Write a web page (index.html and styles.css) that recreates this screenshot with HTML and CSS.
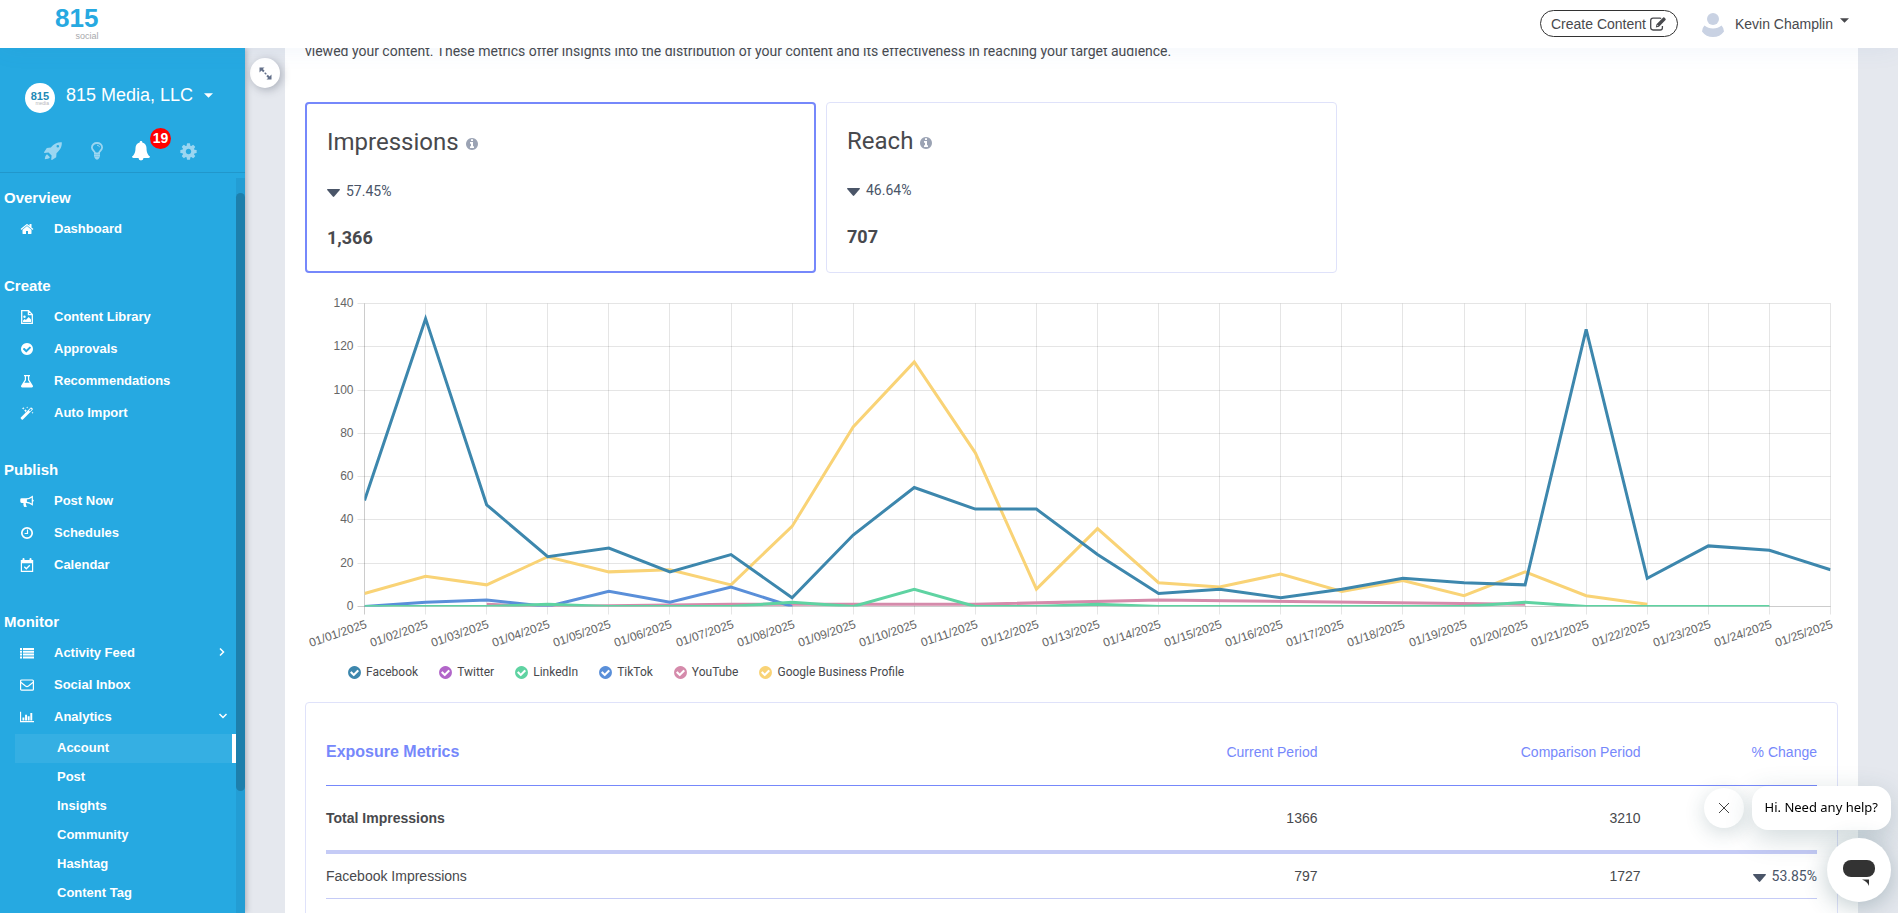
FILE: index.html
```html
<!DOCTYPE html>
<html lang="en">
<head>
<meta charset="utf-8">
<title>815 Social - Account Analytics</title>
<link rel="stylesheet" href="styles.css">
</head>
<body>
<svg class="sprite" aria-hidden="true">
  <symbol id="i-home" viewBox="0 0 1792 1792"><path d="M1472 992v480q0 26-19 45t-45 19h-384v-384h-256v384h-384q-26 0-45-19t-19-45v-480q0-1 .5-3t.5-3l575-474 575 474q1 2 1 6zm223-69l-62 74q-8 9-21 11h-3q-13 0-21-7l-692-577-692 577q-12 8-24 7-13-2-21-11l-62-74q-8-10-7-23.5t11-21.5l719-599q32-26 76-26t76 26l244 204v-195q0-14 9-23t23-9h192q14 0 23 9t9 23v408l219 182q10 8 11 21.5t-7 23.5z"/></symbol>
  <symbol id="i-check" viewBox="0 0 1792 1792"><path d="M1412 734q0-28-18-46l-91-90q-19-19-45-19t-45 19l-408 407-226-226q-19-19-45-19t-45 19l-91 90q-18 18-18 46 0 27 18 45l362 362q19 19 45 19 27 0 46-19l543-543q18-18 18-45zm252 162q0 209-103 385.5t-279.5 279.5-385.5 103-385.5-103-279.5-279.5-103-385.5 103-385.5 279.5-279.5 385.5-103 385.5 103 279.5 279.5 103 385.5z"/></symbol>
  <symbol id="i-info" viewBox="0 0 1792 1792"><path d="M1152 1376v-160q0-14-9-23t-23-9h-96v-512q0-14-9-23t-23-9h-320q-14 0-23 9t-9 23v160q0 14 9 23t23 9h96v320h-96q-14 0-23 9t-9 23v160q0 14 9 23t23 9h448q14 0 23-9t9-23zm-128-896v-160q0-14-9-23t-23-9h-192q-14 0-23 9t-9 23v160q0 14 9 23t23 9h192q14 0 23-9t9-23zm640 416q0 209-103 385.5t-279.5 279.5-385.5 103-385.5-103-279.5-279.5-103-385.5 103-385.5 279.5-279.5 385.5-103 385.5 103 279.5 279.5 103 385.5z"/></symbol>
  <symbol id="i-gear" viewBox="0 0 1792 1792"><path d="M1152 896q0-106-75-181t-181-75-181 75-75 181 75 181 181 75 181-75 75-181zm512-109v222q0 12-8 23t-20 13l-185 28q-19 54-39 91 35 50 107 138 10 12 10 25t-9 23q-27 37-99 108t-94 71q-12 0-26-9l-138-108q-44 23-91 38-16 136-29 186-7 28-36 28h-222q-14 0-24.5-8.5t-11.5-21.5l-28-184q-49-16-90-37l-141 107q-10 9-25 9-14 0-25-11-126-114-165-168-7-10-7-23 0-12 8-23 15-21 51-66.5t54-70.5q-27-50-41-99l-183-27q-13-2-21-12.5t-8-23.5v-222q0-12 8-23t19-13l186-28q14-46 39-92-40-57-107-138-10-12-10-24 0-10 9-23 26-36 98.5-107.5t94.5-71.5q13 0 26 10l138 107q44-23 91-38 16-136 29-186 7-28 36-28h222q14 0 24.5 8.5t11.5 21.5l28 184q49 16 90 37l142-107q9-9 24-9 13 0 25 10 129 119 165 170 7 8 7 22 0 12-8 23-15 21-51 66.5t-54 70.5q26 50 41 98l183 28q13 2 21 12.5t8 23.5z"/></symbol>
  <symbol id="i-rocket" viewBox="0 0 18 18"><path fill-rule="evenodd" d="M17.8.3C18 4 17 7.400 12.500 11.200L12.200 15.200 8 18 7.200 17.700 7.600 13.600 4.500 10.500.4 11 0 10.200 2.800 6 6.800 5.600C10.500 1 14 0 17.800.3ZM13.800 2.900a1.300 1.300 0 1 0 0 2.600 1.300 1.300 0 0 0 0-2.600ZM3 12.200l3 3C5 16.800 3 17 .8 17.300 1 15 1.500 13.300 3 12.200Z"/></symbol>
  <symbol id="i-bulb" viewBox="0 0 12 18"><path fill="none" stroke="currentColor" stroke-width="1.800" d="M4.100 11.500C4.100 9.200.9 8.500.9 5.500.9 2.700 3.200 1 6 1s5.100 1.700 5.100 4.500c0 3-3.200 3.700-3.200 6"/><path d="M3 10.500h6v2.200H3zM3 13h6v1.800H3zM3.200 15h5.600L7.800 16.500C7.300 18 4.700 18 4.200 16.500Z"/><path fill="none" stroke="currentColor" stroke-width="1" d="M6 3.300c1.400 0 2.300.7 2.400 1.900"/></symbol>
  <symbol id="i-bell" viewBox="0 0 18 20"><path d="M9 0c.9 0 1.400.6 1.300 1.400 2.700.6 4.200 2.800 4.200 5.600 0 4.600 1.300 6.800 3.500 8.600 0 .8-.6 1.400-1.400 1.400h-5.100A2.500 2.500 0 0 1 6.500 17H1.400C.6 17 0 16.400 0 15.600 2.200 13.800 3.500 11.600 3.500 7c0-2.800 1.500-5 4.200-5.600C7.600.6 8.100 0 9 0Z"/></symbol>
  <symbol id="i-file" viewBox="0 0 14 14"><path fill="none" stroke="currentColor" stroke-width="1.300" d="M1.700.7h6.900l3.700 3.700v8.900H1.700ZM8.400.7v3.900h3.900"/><circle cx="4.500" cy="6.800" r="1.200"/><path d="M3 12v-1.500L4.700 9l1.200 1L8.700 7 11 9.500V12Z"/></symbol>
  <symbol id="i-flask" viewBox="0 0 14 14"><path fill-rule="evenodd" d="M4 1h6v1.200h-.8v3.600l3.600 5.700c.6 1-.1 1.900-1 1.900H2.200c-.9 0-1.600-.9-1-1.900l3.600-5.700V2.200H4ZM6 2.200v4L4.400 8.800h5.200L8 6.200v-4Z"/></symbol>
  <symbol id="i-magic" viewBox="0 0 14 14"><path fill-rule="evenodd" d="M.8 11.500 10.500 1.700q.6-.5 1.200 0l.9.900q.5.600 0 1.200L2.900 13.500q-.6.500-1.200 0l-.9-.9q-.5-.6 0-1.100ZM9 4.500l1 1 1.700-2L10.900 2.600ZM3.200.8l.4 1.100 1.100.4-1.100.4-.4 1.100-.4-1.100-1.100-.4 1.100-.4ZM7.200.4l.3.800.8.300-.8.300-.3.800-.3-.8L6 1.500l.9-.3ZM12.500 5.500l.3.900.9.300-.9.300-.3.900-.3-.9-.9-.3.900-.3ZM5.500 3l.5 1.200 1.200.5L6 5.200 5.500 6.400 5 5.200 3.800 4.700 5 4.200Z"/></symbol>
  <symbol id="i-horn" viewBox="0 0 14 14"><path fill-rule="evenodd" d="M12.900 1.500v3.900q.9.300.9 1.200t-.9 1.200v3.900Q9.500 9.100 6.300 9c-.7.300-.8 1-.2 1.500-.3.700.1 1.200 1 1.700-.6.900-2.600.9-3.200.2-.2-1.100-.8-2-.4-3.500H1.600Q.3 8.900.3 7.600V5.600Q.3 4.300 1.600 4.300h4.200Q9.500 4.200 12.900 1.500ZM11.700 3.700Q9.300 5.300 6.900 5.500v2.200q2.500.2 4.800 1.800Z"/></symbol>
  <symbol id="i-clock" viewBox="0 0 14 14"><circle cx="7" cy="7" r="5.200" fill="none" stroke="currentColor" stroke-width="1.700"/><path fill="none" stroke="currentColor" stroke-width="1.200" d="M7.500 3.600v3.900H4.600"/></symbol>
  <symbol id="i-cal" viewBox="0 0 14 14"><path fill-rule="evenodd" d="M.8 2h1.700V1q0-1 1-1t1 1v1h5V1q0-1 1-1t1 1v1h1.700v12H.8ZM2 5.200v7.600h10V5.200Z"/><path fill="none" stroke="currentColor" stroke-width="1.300" d="M4.300 8.800l2 2 3.500-3.600"/></symbol>
  <symbol id="i-list" viewBox="0 0 14 14"><path d="M0 2h2v2H0zM3 2h11v2H3zM0 4.800h2v2H0zM3 4.800h11v2H3zM0 7.600h2v2H0zM3 7.600h11v2H3zM0 10.400h2v2H0zM3 10.400h11v2H3z"/></symbol>
  <symbol id="i-mail" viewBox="0 0 14 14"><rect x=".6" y="2" width="12.800" height="10.200" rx="1" fill="none" stroke="currentColor" stroke-width="1.200"/><path fill="none" stroke="currentColor" stroke-width="1.200" d="M.8 4.300 5.500 8q1.500 1.100 3 0l4.700-3.700"/></symbol>
  <symbol id="i-bars" viewBox="0 0 16 14"><path d="M0 1h1.300v10.700H16V13H0ZM2.800 7.500h2.200V11H2.800zM5.800 4.500H8V11H5.800zM8.800 6H11v5H8.800zM11.800 2.500H14V11h-2.200z"/></symbol>
  <symbol id="i-edit" viewBox="0 0 16 14"><path fill="none" stroke="currentColor" stroke-width="1.300" d="M11.200 1.500Q10.800 1.200 10 1.200H3Q.7 1.200.7 3.400v7.200Q.7 13 3 13h7.200q2.200 0 2.200-2.300V9"/><path fill-rule="evenodd" d="M13.200.6q.6-.6 1.200 0l1.100 1.100q.6.600 0 1.200L9 9.700 5.800 10.500 6.500 7.200ZM7.400 7.700l-.3 1.400 1.400-.3Z"/></symbol>
  <symbol id="i-caret" viewBox="0 0 10 5"><path d="M0 0h10L5 5Z"/></symbol>
  <symbol id="i-down" viewBox="0 0 13 8"><path d="M.6 0h11.800q.8.200.4.900L7.200 7.600q-.7.700-1.400 0L.2.900Q-.2.200.6 0Z"/></symbol>
  <symbol id="i-expand" viewBox="0 0 13 13"><path d="M.5.500h5L3.900 2.100l1.700 1.700-1.400 1.400-1.700-1.700L.5 5.500ZM12.500 12.500h-5l1.600-1.600-1.700-1.700 1.400-1.400 1.700 1.700 2-2ZM6.200 5.200l1.600 1.600-1 1-1.600-1.600Z"/></symbol>
</svg>

<header class="topbar">
  <a class="logo" href="#"><span class="logo-num">815</span><span class="logo-sub">social</span></a>
  <div class="topbar-tools">
    <button class="create" type="button">Create Content <svg class="ic-edit"><use href="#i-edit"/></svg></button>
    <button class="user" type="button">
      <svg class="avatar" viewBox="0 0 22 24"><circle cx="11" cy="6" r="6"/><path d="M2.500 12.500Q6 15.500 11 15.500t8.500-3Q22 15 22 18.500 18 24 11 24T0 18.500Q0 15 2.500 12.500Z"/></svg>
      <span>Kevin Champlin</span>
      <svg class="caret"><use href="#i-caret"/></svg>
    </button>
  </div>
</header>

<div class="shell">
  <aside class="sidebar">
    <button class="account" type="button">
      <span class="badge-logo"><span class="bl-num">815</span><span class="bl-sub">media</span></span>
      <span class="account-name">815 Media, LLC</span>
      <svg class="caret"><use href="#i-caret"/></svg>
    </button>
    <div class="quick">
      <button type="button" aria-label="Launch"><svg class="q-rocket"><use href="#i-rocket"/></svg></button>
      <button type="button" aria-label="Ideas"><svg class="q-bulb"><use href="#i-bulb"/></svg></button>
      <button type="button" aria-label="Notifications" class="on"><svg class="q-bell"><use href="#i-bell"/></svg><span class="count">19</span></button>
      <button type="button" aria-label="Settings"><svg class="q-gear"><use href="#i-gear"/></svg></button>
    </div>
    <div class="nav-wrap">
      <nav class="nav">
        <h2>Overview</h2>
        <a href="#"><svg><use href="#i-home"/></svg>Dashboard</a>
        <h2>Create</h2>
        <a href="#"><svg><use href="#i-file"/></svg>Content Library</a>
        <a href="#"><svg><use href="#i-check"/></svg>Approvals</a>
        <a href="#"><svg><use href="#i-flask"/></svg>Recommendations</a>
        <a href="#"><svg><use href="#i-magic"/></svg>Auto Import</a>
        <h2>Publish</h2>
        <a href="#"><svg><use href="#i-horn"/></svg>Post Now</a>
        <a href="#"><svg><use href="#i-clock"/></svg>Schedules</a>
        <a href="#"><svg><use href="#i-cal"/></svg>Calendar</a>
        <h2>Monitor</h2>
        <a href="#"><svg><use href="#i-list"/></svg>Activity Feed<svg class="chev" viewBox="0 0 14 14"><path d="M5 2.500 8.500 6 5 9.500"/></svg></a>
        <a href="#"><svg><use href="#i-mail"/></svg>Social Inbox</a>
        <a href="#"><svg><use href="#i-bars"/></svg>Analytics<svg class="chev" viewBox="0 0 14 14"><path d="M4.500 4 8 7.500 11.500 4"/></svg></a>
        <div class="sub">
          <a class="active" href="#">Account</a>
          <a href="#">Post</a>
          <a href="#">Insights</a>
          <a href="#">Community</a>
          <a href="#">Hashtag</a>
          <a href="#">Content Tag</a>
        </div>
      </nav>
      <div class="track"><div class="thumb"></div></div>
    </div>
  </aside>

  <div class="stage">
    <button class="expand" type="button" aria-label="Toggle sidebar"><svg><use href="#i-expand"/></svg></button>
    <main class="page">
      <p class="intro">viewed your content. These metrics offer insights into the distribution of your content and its effectiveness in reaching your target audience.</p>
      <div class="cards">
        <section class="card selected">
          <h3>Impressions <svg><use href="#i-info"/></svg></h3>
          <p class="delta"><svg><use href="#i-down"/></svg>57.45%</p>
          <p class="total">1,366</p>
        </section>
        <section class="card">
          <h3>Reach <svg><use href="#i-info"/></svg></h3>
          <p class="delta"><svg><use href="#i-down"/></svg>46.64%</p>
          <p class="total">707</p>
        </section>
      </div>
      <svg class="chart" id="chart" role="img" aria-label="Impressions by day"></svg>
      <ul class="legend">
        <li class="fb"><svg><use href="#i-check"/></svg>Facebook</li>
        <li class="tw"><svg><use href="#i-check"/></svg>Twitter</li>
        <li class="li"><svg><use href="#i-check"/></svg>LinkedIn</li>
        <li class="tk"><svg><use href="#i-check"/></svg>TikTok</li>
        <li class="yt"><svg><use href="#i-check"/></svg>YouTube</li>
        <li class="gb"><svg><use href="#i-check"/></svg>Google Business Profile</li>
      </ul>
      <section class="metrics">
        <table>
          <colgroup><col class="c-name"><col class="c-cur"><col class="c-cmp"><col class="c-chg"></colgroup>
          <thead><tr><th>Exposure Metrics</th><th>Current Period</th><th>Comparison Period</th><th>% Change</th></tr></thead>
          <tbody>
            <tr class="sum"><th>Total Impressions</th><td>1366</td><td>3210</td><td class="pct"><svg><use href="#i-down"/></svg>57.45%</td></tr>
            <tr><th>Facebook Impressions</th><td>797</td><td>1727</td><td class="pct"><svg><use href="#i-down"/></svg>53.85%</td></tr>
            <tr><th></th><td></td><td></td><td></td></tr>
          </tbody>
        </table>
      </section>
    </main>
  </div>
</div>

<div class="chat">
  <div class="chat-row">
    <button class="chat-close" type="button" aria-label="Close"><svg viewBox="0 0 12 12"><path d="M1 1l10 10M11 1 1 11"/></svg></button>
    <div class="chat-msg">Hi. Need any help?</div>
  </div>
  <button class="chat-open" type="button" aria-label="Open chat"><svg viewBox="0 0 32 27"><rect width="32" height="17" rx="8"/><path d="M19 19.500h7v6.500q-1.500-4.500-7-6.500Z"/></svg></button>
</div>
<script src="chart.js"></script>
</body>
</html>
```
FILE: styles.css
```css
* { box-sizing: border-box; }
html, body { height: 100%; }
body {
  margin: 0;
  display: flex;
  flex-direction: column;
  overflow: hidden;
  font: 14px/20px "Liberation Sans", Arial, sans-serif;
  color: #48494d;
  background: #e5e8ee;
}
.sprite { position: absolute; width: 0; height: 0; }
svg { fill: currentColor; flex: none; }
button { border: 0; background: none; padding: 0; margin: 0; font: inherit; color: inherit; cursor: pointer; }
a { color: inherit; text-decoration: none; }
h2, h3, p, ul { margin: 0; padding: 0; }

.topbar {
  position: relative;
  z-index: 5;
  flex: none;
  height: 48px;
  display: flex;
  justify-content: space-between;
  background: #fff;
  box-shadow: 0 0 26px rgba(60, 110, 190, .08);
}
.logo { display: flex; flex-direction: column; align-items: flex-end; padding: 4px 0 0 55px; }
.logo-num { font: bold 26px/28px "Liberation Sans", Arial, sans-serif; color: #26a9e1; }
.logo-sub { font: 9px/8px "Liberation Sans", Arial, sans-serif; color: #a7a9ac; }
.topbar-tools { display: flex; align-items: flex-start; padding: 10px 49px 0 0; gap: 24px; }
.create {
  height: 27px;
  display: flex;
  align-items: center;
  gap: 4px;
  padding: 0 11px 0 10px;
  border: 1px solid #333;
  border-radius: 14px;
}
.ic-edit { width: 16px; height: 14px; }
.user { display: flex; align-items: center; gap: 11px; height: 27px; }
.avatar { width: 22px; height: 24px; fill: #c9d2e3; align-self: flex-end; }
.caret { width: 9px; height: 5px; }
.user .caret { margin: -6px 0 0 -4px; }

.shell { flex: 1; display: flex; min-height: 0; }
.sidebar {
  position: relative;
  z-index: 2;
  flex: none;
  width: 245px;
  display: flex;
  flex-direction: column;
  background: #26a9e1;
  color: #fff;
  box-shadow: 1px 0 6px rgba(40, 50, 70, .35);
}
.account { display: flex; align-items: center; padding: 35px 0 0 25px; font-size: 18px; line-height: 24px; }
.badge-logo {
  width: 30px; height: 30px;
  margin-right: 11px;
  border-radius: 50%;
  background: #fff;
  display: flex; flex-direction: column; align-items: flex-end;
  padding: 8px 6px 0 0;
}
.account-name { margin-top: -6px; }
.bl-num { font: bold 11px/10px "Liberation Sans", Arial, sans-serif; color: #2189b5; }
.bl-sub { font: 5px/5px "Liberation Sans", Arial, sans-serif; color: #b5b7ba; }
.account .caret { margin: -5px 0 0 11px; }
.quick {
  display: flex;
  align-items: center;
  height: 60px;
  padding: 17px 0 0 44px;
  gap: 29px;
  border-bottom: 1px solid #2197cb;
}
.quick button { position: relative; display: flex; color: #9bd6f1; }
.quick .on { color: #fff; }
.q-rocket { width: 18px; height: 18px; }
.q-bulb { width: 12px; height: 18px; }
.q-bell { width: 18px; height: 20px; }
.q-gear { width: 19px; height: 19px; }
.count {
  position: absolute;
  left: 18px; top: -13px;
  width: 21px; height: 21px;
  border-radius: 50%;
  background: #f00;
  font: bold 14px/21px "Liberation Sans", Arial, sans-serif;
  text-align: center;
}
.nav-wrap { flex: 1; min-height: 0; display: flex; padding-top: 5px; }
.nav { flex: 1; min-width: 0; overflow: hidden; padding-top: 10px; font-size: 13px; font-weight: bold; }
.nav h2 { font-size: 15px; line-height: 20px; padding-left: 4px; margin: 31px 0 5px; }
.nav h2:first-child { margin-top: 0; }
.nav > a { display: flex; align-items: center; height: 32px; padding-left: 20px; }
.nav > a > svg:first-child { width: 14px; height: 14px; margin-right: 20px; }
.nav .chev { width: 14px; height: 14px; margin-left: auto; margin-right: 7px; fill: none; stroke: #fff; stroke-width: 1.500; }
.sub { padding: 1px 0 0 15px; }
.sub a { display: block; height: 29px; line-height: 27px; padding-left: 42px; border-right: 4px solid transparent; }
.sub .active { background: #35afe3; border-color: #fff; }
.track { width: 9px; background: #239dd4; padding-top: 15px; }
.thumb { height: 83%; border-radius: 5px; background: #1d7fac; }

.stage { position: relative; flex: 1; min-width: 0; padding: 0 40px; overflow: hidden; }
.expand {
  position: absolute;
  left: 5px; top: 10px;
  width: 30px; height: 30px;
  border-radius: 50%;
  background: #fff;
  color: #63708a;
  box-shadow: 2px 2px 8px rgba(60, 70, 90, .35);
  display: flex; align-items: center; justify-content: center;
}
.expand svg { width: 13px; height: 13px; }
.page { background: #fff; padding: 0 20px; min-height: 100%; font-family: Roboto, sans-serif; }
.intro { font-size: 14px; line-height: 20px; margin-top: -7px; padding-bottom: 41px; white-space: nowrap; }
.cards { display: grid; grid-template-columns: repeat(2, calc(100% / 3)); gap: 10px; }
.card { height: 171px; border: 1px solid #dfe2fa; border-radius: 4px; padding: 23px 20px 0; }
.selected { border: 2px solid #7688fb; }
.card h3 { font-size: 24px; font-weight: 400; line-height: 30px; display: flex; align-items: center; gap: 6px; }
.card h3 svg { width: 14px; height: 14px; fill: #9ba3b4; margin-top: 4px; }
.delta { display: flex; align-items: center; gap: 6px; margin-top: 24px; color: #4a5568; }
.delta svg { width: 13px; height: 8px; margin-top: 4px; }
.total { margin-top: 25px; font-size: 18px; line-height: 24px; font-weight: 700; }

.chart { display: block; width: 100%; height: 377px; margin-top: 10px; }
.grid { stroke: rgba(0, 0, 0, .1); }
.axis { stroke: rgba(0, 0, 0, .2); }
.tick { font: 12px "Liberation Sans", Arial, sans-serif; fill: #666; text-anchor: end; }
.line { fill: none; stroke-width: 3; stroke-linejoin: miter; }
.s-fb { stroke: #3d87ad; } .s-li { stroke: #5fd3a2; } .s-tk { stroke: #5a8fd9; }
.s-yt { stroke: #d58bab; } .s-gb { stroke: #f9d376; }
.legend { list-style: none; display: flex; gap: 20px; padding: 2px 0 0 42px; font-size: 12px; line-height: 20px; }
.legend li { display: flex; align-items: center; gap: 4px; }
.legend svg { width: 15px; height: 15px; }
.fb svg { fill: #3d87ad; } .tw svg { fill: #b266c9; } .li svg { fill: #5fd3a2; }
.tk svg { fill: #5a8fd9; } .yt svg { fill: #d58bab; } .gb svg { fill: #f9d376; }

.metrics { margin-top: 20px; border: 1px solid #dfe2fa; border-radius: 4px; padding: 17px 20px; font-family: "Liberation Sans", Arial, sans-serif; }
table { width: 100%; border-collapse: collapse; table-layout: fixed; }
.c-name { width: 45%; } .c-cur { width: 21.500%; } .c-cmp { width: 21.670%; } .c-chg { width: 11.830%; }
th, td { padding: 0; text-align: right; font-weight: 400; height: 46px; border-bottom: 1px solid #c5cbf6; }
th:first-child { text-align: left; }
thead th { height: 65px; color: #7688fb; border-bottom-color: #7688fb; }
thead th:first-child { font-size: 16px; font-weight: 700; }
.sum th, .sum td { height: 67px; border-bottom: 4px solid #c5cbf6; }
.sum th { font-weight: 700; }
.pct { font-family: Roboto, sans-serif; color: #4a5568; }
.pct svg { width: 13px; height: 8px; margin-right: 6px; vertical-align: -1px; }

.chat { position: fixed; z-index: 6; right: 7px; bottom: 11px; display: flex; flex-direction: column; align-items: flex-end; gap: 8px; }
.chat-row { display: flex; align-items: center; gap: 8px; }
.chat-close { width: 40px; height: 40px; border-radius: 50%; background: #fff; box-shadow: 0 5px 20px rgba(40, 80, 90, .2); display: flex; align-items: center; justify-content: center; }
.chat-close svg { width: 12px; height: 12px; stroke: #444; }
.chat-msg { height: 44px; padding: 0 13px; border-radius: 16px; background: #fff; color: #000; font: 13px/42px "Noto Sans", sans-serif; box-shadow: 0 8px 28px rgba(40, 80, 90, .22); }
.chat-open { width: 64px; height: 64px; border-radius: 50%; background: #fff; box-shadow: 0 5px 24px rgba(40, 80, 90, .3); display: flex; align-items: center; justify-content: center; }
.chat-open svg { width: 32px; height: 27px; fill: #333; margin-top: 6px; }
```
FILE: chart.js
```js
(function () {
  var series = [
    ["s-gb", [6,14,10,23,16,17,10,37,83,113,71,8,36,11,9,15,7,12,5,16,5,1]],
    ["s-yt", [null,null,1,0,null,null,1,1,1,1,1,null,null,3,null,null,null,null,null,1]],
    ["s-tk", [0,2,3,0,7,2,9,0]],
    ["s-li", [0,0,0,1,0,0,0,2,0,8,0,0,1,0,0,0,0,0,0,2,0,0,0,0]],
    ["s-fb", [49,133,47,23,27,16,24,4,33,55,45,45,24,6,8,4,8,13,11,10,128,13,28,26,17]]
  ];
  var svg = document.getElementById("chart");
  var DAYS = 25, MAX = 140, LEFT = 59.5, TOP = 20.5, BOTTOM = 323.5;

  function draw() {
    var right = svg.clientWidth - 7.5;
    var px = function (i) { return LEFT + (right - LEFT) * i / (DAYS - 1); };
    var py = function (v) { return BOTTOM - (BOTTOM - TOP) * v / MAX; };
    var snap = function (n) { return Math.floor(n) + 0.5; };
    var out = "";
    for (var v = 0; v <= MAX; v += 20) {
      var y = snap(py(v));
      out += '<path class="' + (v ? "grid" : "axis") + '" d="M' + (LEFT - 7) + " " + y + "H" + right + '"/>';
      out += '<text class="tick" x="' + (LEFT - 11) + '" y="' + (y + 3) + '">' + v + "</text>";
    }
    for (var i = 0; i < DAYS; i++) {
      var x = snap(px(i));
      out += '<path class="' + (i ? "grid" : "axis") + '" d="M' + x + " " + TOP + "V" + (BOTTOM + 8) + '"/>';
      var label = "01/" + (i < 9 ? "0" : "") + (i + 1) + "/2025";
      out += '<text class="tick" transform="translate(' + (x + 3) + " " + (BOTTOM + 21) + ') rotate(-19)">' + label + "</text>";
    }
    out += '<clipPath id="area"><rect x="' + LEFT + '" y="' + TOP + '" width="' + (right - LEFT) + '" height="' + (BOTTOM - TOP) + '"/></clipPath><g clip-path="url(#area)">';
    series.forEach(function (s) {
      var pts = [];
      s[1].forEach(function (val, k) { if (val !== null) pts.push(px(k) + "," + py(val)); });
      out += '<polyline class="line ' + s[0] + '" points="' + pts.join(" ") + '"/>';
    });
    svg.innerHTML = out + "</g>";
  }
  draw();
  window.addEventListener("resize", draw);
})();
```
